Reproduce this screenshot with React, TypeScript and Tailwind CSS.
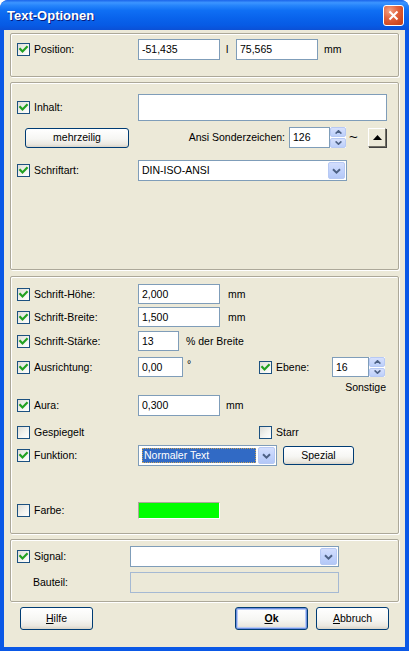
import React from "react";

function Check({ checked }: { checked?: boolean }) {
  return (
    <span className="w-[13px] h-[13px] shrink-0 border border-[#1c5180] bg-[linear-gradient(135deg,#dcdcd7_0%,#f3f3ef_55%,#ffffff_100%)] flex items-center justify-center">
      {checked && (
        <svg width="11" height="11" viewBox="0 0 11 11">
          <path d="M2.2 5 L4.5 7.4 L8.8 3" stroke="#21a121" strokeWidth="2.2" fill="none" strokeLinecap="square" />
        </svg>
      )}
    </span>
  );
}

function Group({ className, children }: { className: string; children?: React.ReactNode }) {
  return (
    <div className={"shrink-0 border border-[#aca899] rounded-[2px] shadow-[inset_1px_1px_0_#ffffff,1px_1px_0_#ffffff] " + className}>
      {children}
    </div>
  );
}

function DropBtn() {
  return (
    <div className="w-[17px] h-full shrink-0 rounded-[2px] border border-[#b7c9f4] bg-[linear-gradient(180deg,#d3defd_0%,#c2d3fc_50%,#b4c8f7_100%)] flex items-center justify-center">
      <svg width="9" height="6" viewBox="0 0 9 6">
        <path d="M1 1.2 L4.5 4.6 L8 1.2" stroke="#4d6185" strokeWidth="2" fill="none" />
      </svg>
    </div>
  );
}

function Spin() {
  return (
    <div className="w-[16px] h-full shrink-0 flex flex-col gap-[1px] bg-white">
      <div className="flex-1 rounded-[2px] border border-[#b7c9f4] bg-[linear-gradient(180deg,#d6e0fd_0%,#bccffa_100%)] flex items-center justify-center">
        <svg width="7" height="4" viewBox="0 0 7 4">
          <path d="M0.6 3.6 L3.5 0.8 L6.4 3.6" stroke="#4d6185" strokeWidth="1.6" fill="none" />
        </svg>
      </div>
      <div className="flex-1 rounded-[2px] border border-[#b7c9f4] bg-[linear-gradient(180deg,#d6e0fd_0%,#bccffa_100%)] flex items-center justify-center">
        <svg width="7" height="4" viewBox="0 0 7 4">
          <path d="M0.6 0.4 L3.5 3.2 L6.4 0.4" stroke="#4d6185" strokeWidth="1.6" fill="none" />
        </svg>
      </div>
    </div>
  );
}

const btn =
  "shrink-0 h-full border border-[#003c74] rounded-[3px] bg-[linear-gradient(180deg,#ffffff_0%,#f6f6f3_55%,#ebe8e0_85%,#d8d3c8_100%)] flex items-center justify-center";

export default function App() {
  return (
    <div className="w-[409px] h-[651px] flex flex-col bg-[#0a58e6] rounded-t-[8px] font-['Liberation_Sans',Arial,sans-serif] text-[10.5px] leading-[13px] text-black overflow-hidden">
      {/* title bar */}
      <div className="h-[30px] shrink-0 flex items-center pl-[7px] pr-[5px] pt-[1px] rounded-t-[8px] bg-[linear-gradient(180deg,#1b64ea_0%,#3c95ff_9%,#2785fb_18%,#0f6ff4_35%,#0963ec_60%,#075ae4_85%,#0b50d6_100%)]">
        <span className="text-white font-bold text-[13px] [text-shadow:1px_1px_0_#0a1a7a]">Text-Optionen</span>
        <div className="ml-auto w-[21px] h-[21px] rounded-[3px] border border-white bg-[radial-gradient(circle_at_30%_25%,#f3a283_0%,#e2643f_40%,#cf4a22_75%,#c03f18_100%)] flex items-center justify-center">
          <svg width="11" height="11" viewBox="0 0 11 11">
            <path d="M1.5 1.5 L9.5 9.5 M9.5 1.5 L1.5 9.5" stroke="#ffffff" strokeWidth="2.1" />
          </svg>
        </div>
      </div>

      {/* body */}
      <div className="flex-1 mx-[4px] mb-[4px] bg-[#ece9d8] pt-[3px] px-[6px] flex flex-col">
        {/* group 1 */}
        <Group className="h-[44px] pt-[5px] pl-[6px]">
          <div className="h-[21px] flex items-center">
            <div className="w-[121px] flex items-center gap-[4px]">
              <Check checked />
              <span>Position:</span>
            </div>
            <div className="w-[82px] h-full border border-[#7f9db9] bg-white flex items-center pl-[3px]">-51,435</div>
            <span className="w-[16px] pl-[6px]">l</span>
            <div className="w-[82px] h-full border border-[#7f9db9] bg-white flex items-center pl-[3px]">75,565</div>
            <span className="ml-[6px]">mm</span>
          </div>
        </Group>

        {/* group 2 */}
        <Group className="mt-[5px] h-[188px] pt-[11px] pl-[6px]">
          <div className="h-[27px] flex items-center">
            <div className="w-[121px] flex items-center gap-[4px]">
              <Check checked />
              <span>Inhalt:</span>
            </div>
            <div className="w-[249px] h-full border border-[#7f9db9] bg-white" />
          </div>
          <div className="mt-[6px] h-[21px] flex items-center">
            <div className={btn + " ml-[8px] w-[104px] !h-[20px]"}>mehrzeilig</div>
            <span className="w-[160px] text-right pr-[4px]">Ansi Sonderzeichen:</span>
            <div className="w-[41px] h-full border border-[#7f9db9] bg-white flex items-center pl-[3px]">126</div>
            <Spin />
            <span className="w-[22px] pl-[3px] text-[15px] leading-none pb-[2px]">~</span>
            <div className="w-[18px] h-[19px] shrink-0 bg-[#ece9d8] border border-t-white border-l-white border-r-[#716f64] border-b-[#716f64] shadow-[1px_1px_0_#404040] flex items-center justify-center">
              <svg width="9" height="5" viewBox="0 0 9 5">
                <path d="M0 5 L4.5 0 L9 5 Z" fill="#000000" />
              </svg>
            </div>
          </div>
          <div className="mt-[12px] h-[21px] flex items-center">
            <div className="w-[121px] flex items-center gap-[4px]">
              <Check checked />
              <span>Schriftart:</span>
            </div>
            <div className="w-[209px] h-full border border-[#7f9db9] bg-white flex items-stretch p-[1px]">
              <span className="flex-1 flex items-center pl-[2px]">DIN-ISO-ANSI</span>
              <DropBtn />
            </div>
          </div>
        </Group>

        {/* group 3 */}
        <Group className="mt-[6px] h-[258px] pt-[7px] pl-[6px]">
          <div className="h-[20px] flex items-center">
            <div className="w-[121px] flex items-center gap-[4px]">
              <Check checked />
              <span>Schrift-Höhe:</span>
            </div>
            <div className="w-[82px] h-full border border-[#7f9db9] bg-white flex items-center pl-[3px]">2,000</div>
            <span className="ml-[8px]">mm</span>
          </div>
          <div className="mt-[3px] h-[20px] flex items-center">
            <div className="w-[121px] flex items-center gap-[4px]">
              <Check checked />
              <span>Schrift-Breite:</span>
            </div>
            <div className="w-[82px] h-full border border-[#7f9db9] bg-white flex items-center pl-[3px]">1,500</div>
            <span className="ml-[8px]">mm</span>
          </div>
          <div className="mt-[4px] h-[20px] flex items-center">
            <div className="w-[121px] flex items-center gap-[4px]">
              <Check checked />
              <span>Schrift-Stärke:</span>
            </div>
            <div className="w-[41px] h-full border border-[#7f9db9] bg-white flex items-center pl-[3px]">13</div>
            <span className="ml-[7px]">% der Breite</span>
          </div>
          <div className="mt-[6px] h-[20px] flex items-center">
            <div className="w-[121px] flex items-center gap-[4px]">
              <Check checked />
              <span>Ausrichtung:</span>
            </div>
            <div className="w-[45px] h-full border border-[#7f9db9] bg-white flex items-center pl-[3px]">0,00</div>
            <span className="w-[76px] self-start pl-[4px] pt-[1px]">°</span>
            <div className="w-[73px] flex items-center gap-[4px]">
              <Check checked />
              <span>Ebene:</span>
            </div>
            <div className="w-[37px] h-full border border-[#7f9db9] bg-white flex items-center pl-[3px]">16</div>
            <Spin />
          </div>
          <div className="mt-[3px] h-[14px] flex items-center justify-end pr-[12px]">Sonstige</div>
          <div className="mt-[1px] h-[21px] flex items-center">
            <div className="w-[121px] flex items-center gap-[4px]">
              <Check checked />
              <span>Aura:</span>
            </div>
            <div className="w-[82px] h-full border border-[#7f9db9] bg-white flex items-center pl-[3px]">0,300</div>
            <span className="ml-[6px]">mm</span>
          </div>
          <div className="mt-[6px] h-[20px] flex items-center">
            <div className="w-[242px] flex items-center gap-[4px]">
              <Check />
              <span>Gespiegelt</span>
            </div>
            <div className="flex items-center gap-[4px]">
              <Check />
              <span>Starr</span>
            </div>
          </div>
          <div className="mt-[3px] h-[21px] flex items-center">
            <div className="w-[121px] flex items-center gap-[4px]">
              <Check checked />
              <span>Funktion:</span>
            </div>
            <div className="w-[139px] h-full border border-[#7f9db9] bg-white flex items-stretch p-[1px]">
              <span className="flex-1 ml-[2px] my-[1px] mr-[2px] bg-[#316ac5] text-white border border-dotted border-[#c9a55a] flex items-center pl-[1px]">
                Normaler Text
              </span>
              <DropBtn />
            </div>
            <div className={btn + " ml-[6px] w-[71px] !h-[19px]"}>Spezial</div>
          </div>
          <div className="mt-[36px] h-[17px] flex items-center">
            <div className="w-[121px] flex items-center gap-[4px]">
              <Check />
              <span>Farbe:</span>
            </div>
            <div className="w-[82px] h-full bg-[#00ff00] border border-t-[#aca899] border-l-[#aca899] border-r-white border-b-white" />
          </div>
        </Group>

        {/* group 4 */}
        <Group className="mt-[5px] h-[63px] pt-[6px] pl-[6px]">
          <div className="h-[21px] flex items-center">
            <div className="w-[113px] flex items-center gap-[4px]">
              <Check checked />
              <span>Signal:</span>
            </div>
            <div className="w-[209px] h-full border border-[#7f9db9] bg-white flex items-stretch p-[1px]">
              <span className="flex-1" />
              <DropBtn />
            </div>
          </div>
          <div className="mt-[5px] h-[21px] flex items-center">
            <span className="w-[113px] pl-[16px]">Bauteil:</span>
            <div className="w-[209px] h-full border border-[#a5b9d3] bg-[#ece9d8]" />
          </div>
        </Group>

        {/* buttons */}
        <div className="mt-[5px] h-[23px] flex items-center px-[10px]">
          <div className={btn + " w-[73px]"}>
            <span>
              <span className="underline">H</span>ilfe
            </span>
          </div>
          <div className={btn + " ml-auto w-[73px] shadow-[inset_0_0_0_1px_#6f8fe0,inset_0_0_0_2px_#b7cbf6]"}>
            <span className="font-bold">
              <span className="underline">O</span>k
            </span>
          </div>
          <div className={btn + " ml-[8px] w-[73px]"}>
            <span>
              <span className="underline">A</span>bbruch
            </span>
          </div>
        </div>
      </div>
    </div>
  );
}
